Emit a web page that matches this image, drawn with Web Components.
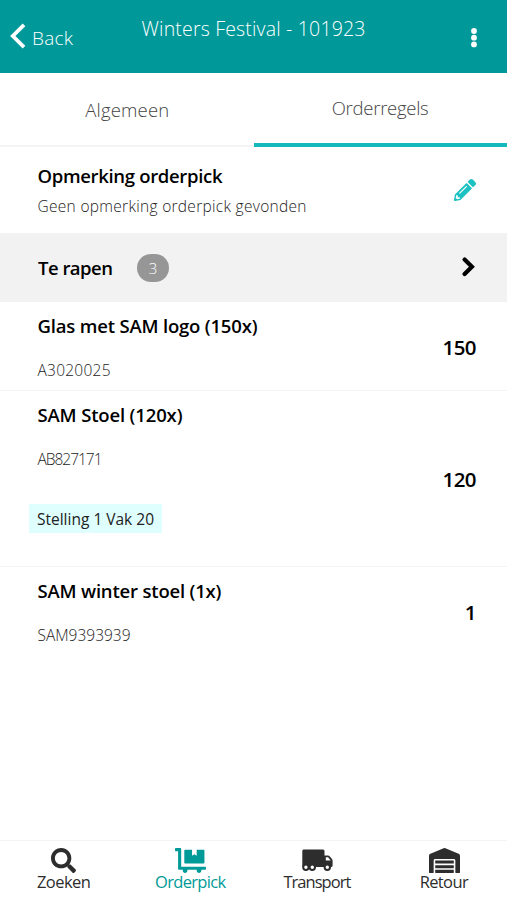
<!DOCTYPE html>
<html lang="nl">
<head>
<meta charset="utf-8">
<title>Orderpick</title>
<style>
    body {
        margin: 0;
        background: #fff;
        font-family: "Open Sans", "Noto Sans", sans-serif;
    }
</style>
</head>
<body>
<order-app></order-app>

<script>
const COLORS = Object.freeze({
    header: "#009898",
    accent: "#14b9bc",
    active: "#009a98",
    pencil: "#1cc1c1",
    dark: "#2d2d2d",
    line: "#f4f4f4",
});

const ICONS = Object.freeze({
    back: `<svg width="16" height="26" viewBox="0 0 16 26"><path d="M14 1.800 2.800 13 14 24.200" fill="none" stroke="currentColor" stroke-width="3.8"/></svg>`,
    dots: `<svg width="6" height="20" viewBox="0 0 6 20"><g fill="currentColor"><circle cx="3" cy="3" r="2.9"/><circle cx="3" cy="9.7" r="2.9"/><circle cx="3" cy="16.400" r="2.9"/></g></svg>`,
    chevron: `<svg width="13" height="20" viewBox="0 0 13 20"><path d="m2.6 2.6 7.3 7.2-7.3 7.2" fill="none" stroke="currentColor" stroke-width="4.2" stroke-linecap="round"/></svg>`,
    pencil: `<svg width="22" height="22" viewBox="0 0 512 512"><path fill="currentColor" d="M497.9 142.1l-46.1 46.1c-4.7 4.7-12.3 4.7-17 0l-111-111c-4.7-4.7-4.7-12.3 0-17l46.1-46.1c18.7-18.7 49.1-18.7 67.9 0l60.1 60.1c18.8 18.7 18.8 49.1 0 67.9zM284.2 99.8L21.6 362.4.4 483.9c-2.9 16.4 11.4 30.6 27.8 27.8l121.5-21.3 262.6-262.6c4.7-4.7 4.7-12.3 0-17l-111-111c-4.8-4.7-12.4-4.7-17.1 0zM124.1 339.9c-5.5-5.5-5.5-14.3 0-19.8l154-154c5.5-5.5 14.3-5.5 19.8 0s5.5 14.3 0 19.8l-154 154c-5.5 5.5-14.3 5.5-19.8 0zM88 424h48v36.3l-64.5 11.3-31.1-31.1L51.7 376H88v48z"/></svg>`,
    search: `<svg width="25" height="25" viewBox="0 0 512 512"><path fill="currentColor" d="M505 442.7L405.3 343c-4.5-4.5-10.6-7-17-7H372c27.6-35.3 44-79.7 44-128C416 93.1 322.9 0 208 0S0 93.1 0 208s93.1 208 208 208c48.3 0 92.7-16.4 128-44v16.3c0 6.4 2.5 12.5 7 17l99.7 99.7c9.4 9.4 24.6 9.4 33.9 0l28.3-28.3c9.4-9.4 9.4-24.6.1-34zM208 336c-70.7 0-128-57.2-128-128 0-70.7 57.2-128 128-128 70.7 0 128 57.2 128 128 0 70.7-57.2 128-128 128z"/></svg>`,
    dolly: `<svg width="31" height="25" viewBox="0 0 640 512"><path fill="currentColor" d="M208 320h384c8.8 0 16-7.2 16-16V48c0-8.8-7.2-16-16-16H448v128l-48-32-48 32V32H208c-8.8 0-16 7.2-16 16v256c0 8.8 7.2 16 16 16zm416 64H128V16c0-8.8-7.2-16-16-16H16C7.2 0 0 7.2 0 16v32c0 8.8 7.2 16 16 16h48v368c0 8.8 7.2 16 16 16h82.9c-1.8 5-2.9 10.4-2.9 16 0 26.5 21.5 48 48 48s48-21.5 48-48c0-5.6-1.2-11-2.9-16H451c-1.8 5-2.9 10.4-2.9 16 0 26.5 21.5 48 48 48s48-21.5 48-48c0-5.6-1.2-11-2.9-16H624c8.8 0 16-7.2 16-16v-32c0-8.8-7.2-16-16-16z"/></svg>`,
    truck: `<svg width="31" height="25" viewBox="0 0 31 25"><path fill="currentColor" d="M1.5 1.5H21Q22.500 1.500 22.500 3V7.500H26Q27 7.500 27.600 8.200L30 11Q30.600 11.800 30.600 13V17.500Q30.600 19 29 19H2Q.3 19 .3 17.500V3Q.3 1.500 1.500 1.500Z"/><path fill="#fff" d="M23.800 9.300h2.300l2.600 3.300h-4.900z"/><g fill="#fff" stroke="currentColor" stroke-width="2"><circle cx="3.900" cy="19.300" r="2.700"/><circle cx="10.300" cy="19.300" r="2.700"/><circle cx="25.300" cy="19.300" r="2.700"/></g></svg>`,
    warehouse: `<svg width="31" height="25" viewBox="0 0 640 512"><path fill="currentColor" d="M504 352H136.400c-4.400 0-8 3.600-8 8l-.1 48c0 4.400 3.600 8 8 8H504c4.400 0 8-3.600 8-8v-48c0-4.400-3.600-8-8-8zm0 96H136.100c-4.400 0-8 3.600-8 8l-.1 48c0 4.400 3.600 8 8 8h368c4.400 0 8-3.600 8-8v-48c0-4.400-3.600-8-8-8zm0-192H136.600c-4.400 0-8 3.600-8 8l-.1 48c0 4.400 3.600 8 8 8H504c4.400 0 8-3.600 8-8v-48c0-4.400-3.600-8-8-8zm106.500-139L338.400 3.700a48.150 48.150 0 0 0-36.900 0L29.500 117C11.700 124.500 0 141.900 0 161.300V504c0 4.400 3.600 8 8 8h80c4.400 0 8-3.600 8-8V256c0-17.600 14.600-32 32.600-32h382.800c18 0 32.600 14.400 32.600 32v248c0 4.400 3.600 8 8 8h80c4.400 0 8-3.600 8-8V161.300c0-19.400-11.700-36.800-29.500-44.300z"/></svg>`,
});

// attach an open shadow root with styles and markup
function render(host, css, html) {
    host.attachShadow({mode: "open"}).innerHTML = `<style>${css}</style>${html}`;
}

/* One line of text, tracked so that it fills the given width. */
class TextLine extends HTMLElement {
    connectedCallback() {
        render(this, `
            :host { display: block; white-space: nowrap; }
            span { display: inline-block; vertical-align: top; }
        `, `<span></span>`);
        const span = this.shadowRoot.querySelector("span");
        const text = this.getAttribute("text");
        span.textContent = text;
        const width = Number(this.getAttribute("width"));
        if (width && text.length > 1) {
            const gap = (width - span.getBoundingClientRect().width) / (text.length - 1);
            span.style.letterSpacing = `${gap.toFixed(3)}px`;
            span.style.marginRight = `${(-gap).toFixed(3)}px`;
        }
    }
}

class AppIcon extends HTMLElement {
    connectedCallback() {
        render(this, `
            :host { display: block; flex: none; }
            svg { display: block; }
        `, ICONS[this.getAttribute("name")]);
    }
}

class AppHeader extends HTMLElement {
    connectedCallback() {
        render(this, `
            :host {
                display: grid;
                grid-template-columns: 1fr auto 1fr;
                height: 73px;
                box-sizing: border-box;
                padding: 0 30px 0 10px;
                background: ${COLORS.header};
                color: #fff;
                font-weight: 350;
            }
            .back { display: flex; gap: 6px; padding-top: 23px; }
            .back text-line { font-size: 19px; line-height: 31px; }
            .title { font-size: 19.500px; line-height: 30px; padding-top: 14px; margin-right: -20px; }
            .more { justify-self: end; padding-top: 28px; }
        `, `
            <div class="back"><app-icon name="back"></app-icon><text-line text="Back" width="41"></text-line></div>
            <text-line class="title" text="${this.getAttribute("title-text")}" width="224"></text-line>
            <app-icon class="more" name="dots"></app-icon>
        `);
    }
}

class TabBar extends HTMLElement {
    connectedCallback() {
        render(this, `
            :host {
                display: grid;
                grid-template-columns: 1fr 1fr;
                height: 74px;
                color: #444;
                font-size: 18.500px;
                font-weight: 350;
                line-height: 30px;
            }
            div { display: flex; justify-content: center; padding: 22px 0 0 1px; border-bottom: 2px solid ${COLORS.line}; }
            .active { padding: 20px 0 0; border-bottom: 4px solid ${COLORS.accent}; }
        `, `
            <div><text-line text="Algemeen" width="84"></text-line></div>
            <div class="active"><text-line text="Orderregels" width="97"></text-line></div>
        `);
    }
}

class OrderNote extends HTMLElement {
    connectedCallback() {
        render(this, `
            :host {
                display: flex;
                justify-content: space-between;
                height: 86px;
                box-sizing: border-box;
                padding: 15px 31px 0 37.500px;
            }
            .head { font-size: 18.500px; font-weight: 650; line-height: 28px; }
            .body { margin-top: 4px; font-size: 15.500px; font-weight: 350; line-height: 24px; color: #222; }
            app-icon { color: ${COLORS.pencil}; padding-top: 17px; }
        `, `
            <div>
                <text-line class="head" text="Opmerking orderpick" width="185"></text-line>
                <text-line class="body" text="Geen opmerking orderpick gevonden" width="269"></text-line>
            </div>
            <app-icon name="pencil"></app-icon>
        `);
    }
}

class PickHeader extends HTMLElement {
    connectedCallback() {
        render(this, `
            :host {
                display: flex;
                align-items: center;
                height: 69px;
                box-sizing: border-box;
                padding: 0 32px 0 38px;
                background: #f2f2f2;
            }
            .head { padding-top: 1px; font-size: 18.500px; font-weight: 650; line-height: 28px; }
            .count {
                width: 32px;
                margin-left: 24px;
                border-radius: 14px;
                background: #969696;
                color: #fff;
                text-align: center;
                font-size: 15px;
                font-weight: 300;
                line-height: 28px;
            }
            app-icon { margin-left: auto; padding-bottom: 2px; }
        `, `
            <text-line class="head" text="Te rapen" width="75"></text-line>
            <text-line class="count" text="${this.getAttribute("count")}"></text-line>
            <app-icon name="chevron"></app-icon>
        `);
    }
}

class OrderRow extends HTMLElement {
    connectedCallback() {
        render(this, `
            :host {
                display: flex;
                justify-content: space-between;
                align-items: center;
                min-height: 89px;
                box-sizing: border-box;
                padding: 0 30.500px 0 37.500px;
                border-bottom: 1px solid ${COLORS.line};
            }
            :host(:last-of-type) { border-bottom-color: transparent; }
            .info { align-self: flex-start; padding-top: 9.500px; }
            .name { font-size: 18.500px; font-weight: 650; line-height: 28px; }
            .code { margin-top: 18.500px; font-size: 15.500px; font-weight: 350; line-height: 24px; color: #222; }
            .qty { padding-top: 1px; font-size: 20.500px; font-weight: 650; line-height: 30px; }
        `, `
            <div class="info">
                <text-line class="name" text="${this.getAttribute("name")}" width="${this.getAttribute("name-width")}"></text-line>
                <text-line class="code" text="${this.getAttribute("code")}" width="${this.getAttribute("code-width")}"></text-line>
                <slot></slot>
            </div>
            <text-line class="qty" text="${this.getAttribute("qty")}" width="34"></text-line>
        `);
    }
}

class LocationChip extends HTMLElement {
    connectedCallback() {
        render(this, `
            :host {
                display: block;
                width: 133px;
                box-sizing: border-box;
                margin: 33px 0 33px -8.500px;
                padding: 1px 0 0 8px;
                background: #dffefe;
                color: #222;
                font-size: 15.500px;
                line-height: 28px;
            }
        `, `<text-line text="${this.getAttribute("text")}" width="117"></text-line>`);
    }
}

class NavItem extends HTMLElement {
    connectedCallback() {
        render(this, `
            :host {
                display: flex;
                flex-direction: column;
                align-items: center;
                padding: 7px 0 0 1px;
                color: ${COLORS.dark};
                font-size: 16.500px;
                line-height: 22px;
            }
            :host([active]) { color: ${COLORS.active}; }
            text-line { margin-top: -2px; }
        `, `
            <app-icon name="${this.getAttribute("icon")}"></app-icon>
            <text-line text="${this.getAttribute("label")}" width="${this.getAttribute("label-width")}"></text-line>
        `);
    }
}

class BottomNav extends HTMLElement {
    connectedCallback() {
        render(this, `
            :host {
                display: grid;
                grid-template-columns: repeat(4, 1fr);
                height: 60px;
                box-sizing: border-box;
                border-top: 1px solid ${COLORS.line};
            }
        `, `
            <nav-item icon="search" label="Zoeken" label-width="54"></nav-item>
            <nav-item icon="dolly" label="Orderpick" label-width="71" active></nav-item>
            <nav-item icon="truck" label="Transport" label-width="68"></nav-item>
            <nav-item icon="warehouse" label="Retour" label-width="49"></nav-item>
        `);
    }
}

class OrderApp extends HTMLElement {
    connectedCallback() {
        render(this, `
            :host { display: flex; flex-direction: column; height: 900px; overflow: hidden; color: #000; }
            main { flex: 1; }
        `, `
            <app-header title-text="Winters Festival - 101923"></app-header>
            <tab-bar></tab-bar>
            <main>
                <order-note></order-note>
                <pick-header count="3"></pick-header>
                <order-row name="Glas met SAM logo (150x)" name-width="220" code="A3020025" code-width="73" qty="150"></order-row>
                <order-row name="SAM Stoel (120x)" name-width="145" code="AB827171" code-width="65" qty="120">
                    <location-chip text="Stelling 1 Vak 20"></location-chip>
                </order-row>
                <order-row name="SAM winter stoel (1x)" name-width="184" code="SAM9393939" code-width="93" qty="1"></order-row>
            </main>
            <bottom-nav></bottom-nav>
        `);
    }
}

window.customElements.define("text-line", TextLine);
window.customElements.define("app-icon", AppIcon);
window.customElements.define("app-header", AppHeader);
window.customElements.define("tab-bar", TabBar);
window.customElements.define("order-note", OrderNote);
window.customElements.define("pick-header", PickHeader);
window.customElements.define("location-chip", LocationChip);
window.customElements.define("order-row", OrderRow);
window.customElements.define("nav-item", NavItem);
window.customElements.define("bottom-nav", BottomNav);
window.customElements.define("order-app", OrderApp);
</script>
</body>
</html>
